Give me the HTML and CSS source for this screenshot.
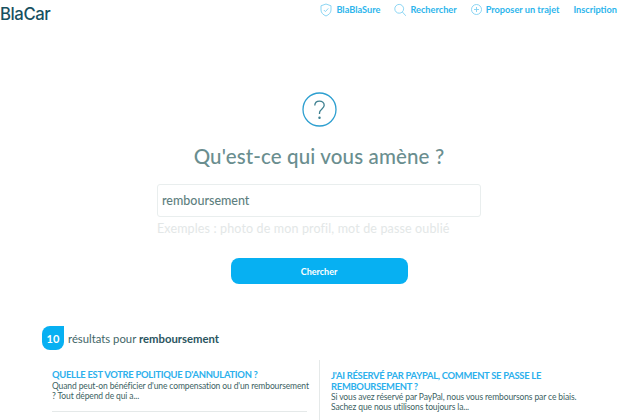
FILE: index.html
```html
<!DOCTYPE html>
<html lang="fr">
<head>
    <meta charset="UTF-8">
    <meta name="viewport" content="width=device-width, initial-scale=1.0">
    <title>BlaCar - Aide</title>
    <link rel="stylesheet" href="styles.css">
</head>
<body>
    <header class="topbar">
        <a class="logo" href="#">BlaCar</a>
        <nav class="menu">
            <a href="#">
                <svg width="12" height="14" viewBox="0 0 12 14" fill="none" stroke="#7fd0f2" stroke-width="0.9"><path d="M6 1 11 2.800V7c0 2.800-2.200 4.800-5 6-2.800-1.200-5-3.200-5-6V2.800z"/><path d="M3.800 7 5.400 8.600 8.300 5.400"/></svg>
                BlaBlaSure
            </a>
            <a href="#">
                <svg width="12" height="14" viewBox="0 0 12 14" fill="none" stroke="#7fd0f2" stroke-width="0.9"><circle cx="5.200" cy="5.800" r="4.400"/><path d="M8.400 9 11.800 12.800"/></svg>
                Rechercher
            </a>
            <a href="#">
                <svg width="11" height="13" viewBox="0 0 11 13" fill="none" stroke="#7fd0f2" stroke-width="0.9"><circle cx="5.500" cy="6.500" r="5"/><path d="M5.500 4V9M3 6.500H8"/></svg>
                Proposer un trajet
            </a>
            <a href="#">Inscription</a>
        </nav>
    </header>

    <main class="search">
        <svg class="help-icon" width="35" height="35" viewBox="0 0 35 35" fill="none" stroke="#2d9fd0" stroke-width="1.300"><circle cx="17.500" cy="17.500" r="16.500"/><path d="M12.800 13.600c0-2.800 2.100-4.500 4.700-4.500s4.700 1.700 4.700 4.200c0 3.600-4.700 3.700-4.700 7.700v1" stroke="#3d7f8f"/><circle cx="17.500" cy="25.800" r="0.600" stroke="#3d7f8f"/></svg>
        <h1>Qu'est-ce qui vous amène ?</h1>
        <input class="search-input" type="text" value="remboursement">
        <p class="hint">Exemples : photo de mon profil, mot de passe oublié</p>
        <button class="search-btn" type="button">Chercher</button>
    </main>

    <section class="results">
        <div class="results-head">
            <span class="count">10</span>
            <span>résultats pour <strong>remboursement</strong></span>
        </div>
        <div class="results-grid">
            <article class="result result-left">
                <h2>QUELLE EST VOTRE POLITIQUE D'ANNULATION ?</h2>
                <p>Quand peut-on bénéficier d'une compensation ou d'un remboursement ? Tout dépend de qui a...</p>
            </article>
            <article class="result result-right">
                <h2>J'AI RÉSERVÉ PAR PAYPAL, COMMENT SE PASSE LE REMBOURSEMENT ?</h2>
                <p>Si vous avez réservé par PayPal, nous vous remboursons par ce biais. Sachez que nous utilisons toujours la...</p>
            </article>
        </div>
    </section>
</body>
</html>
```

FILE: styles.css
```css
html, body {
    height: 100%;
    overflow: hidden;
}

body {
    font-family: 'Lato', sans-serif;
    background: #fff;
    margin: 0;
    padding: 0;
}

.topbar {
    display: flex;
    justify-content: space-between;
    align-items: flex-start;
    height: 92px;
}

.logo {
    font-family: 'Inter', sans-serif;
    font-size: 16.700px;
    font-weight: 500;
    letter-spacing: -0.4px;
    line-height: 18px;
    margin: 5px 0 0 0;
    color: #17505f;
    text-decoration: none;
}

.menu {
    display: flex;
    gap: 14px;
    margin: 2px 3px 0 0;
}

.menu a {
    display: flex;
    align-items: center;
    gap: 4px;
    height: 15px;
    color: #2cb5ec;
    font-size: 9.200px;
    font-weight: 700;
    text-decoration: none;
}

.search {
    display: flex;
    flex-direction: column;
    align-items: center;
    width: 324px;
    margin-left: 157px;
}

.help-icon {
    display: block;
}

h1 {
    font-size: 20.500px;
    font-weight: 500;
    line-height: 26px;
    margin: 16px 0 0;
    color: #6a8e8f;
    white-space: nowrap;
    letter-spacing: 0.14px;
}

.search-input {
    box-sizing: border-box;
    width: 100%;
    height: 33px;
    margin-top: 15px;
    padding: 0 4px;
    border: 1px solid #e9eeee;
    border-radius: 3px;
    font-family: inherit;
    font-size: 12.500px;
    font-weight: 500;
    color: #5e7f80;
    outline: none;
}

.hint {
    align-self: flex-start;
    margin: 4px 0 0;
    font-size: 12.500px;
    line-height: 16px;
    white-space: nowrap;
    color: #e3e7e7;
    letter-spacing: 0.14px;
}

.search-btn {
    width: 177px;
    height: 26px;
    margin-top: 21px;
    background: #07b0f2;
    color: #fff;
    border: none;
    border-radius: 8px;
    font-family: inherit;
    font-size: 9px;
    font-weight: 700;
}

.results {
    margin: 42px 0 0 42px;
    width: 578px;
}

.results-head {
    display: flex;
    align-items: center;
    gap: 4px;
    font-size: 11.300px;
    color: #3f6668;
}

.results-head strong {
    color: #2a5560;
    font-weight: 700;
}

.count {
    display: flex;
    align-items: center;
    justify-content: center;
    width: 22px;
    height: 24px;
    background: #07b0f2;
    border-radius: 8px 0 8px 8px;
    color: #fff;
    font-size: 11px;
    font-weight: 700;
}

.results-grid {
    display: grid;
    grid-template-columns: 277px 1fr;
    margin-top: 10px;
}

.result h2 {
    margin: 0;
    color: #2cb0ec;
    font-size: 9.400px;
    font-weight: 700;
    line-height: 10.500px;
    letter-spacing: -0.27px;
}

.result p {
    margin: 0;
    color: #3c5f63;
    font-size: 8.500px;
    line-height: 10px;
    letter-spacing: -0.12px;
}

.result-left {
    padding: 10px 10px 0 10px;
    height: 44px;
    margin-right: 2px;
}

.result-left p {
    margin-right: -6px;
}

.result-left::after {
    content: "";
    display: block;
    height: 1px;
    margin-top: 10px;
    background: #e5e9e9;
}

.result-right {
    border-left: 1px solid #e5e9e9;
    padding: 11px 30px 0 11px;
    height: 60px;
}
```
